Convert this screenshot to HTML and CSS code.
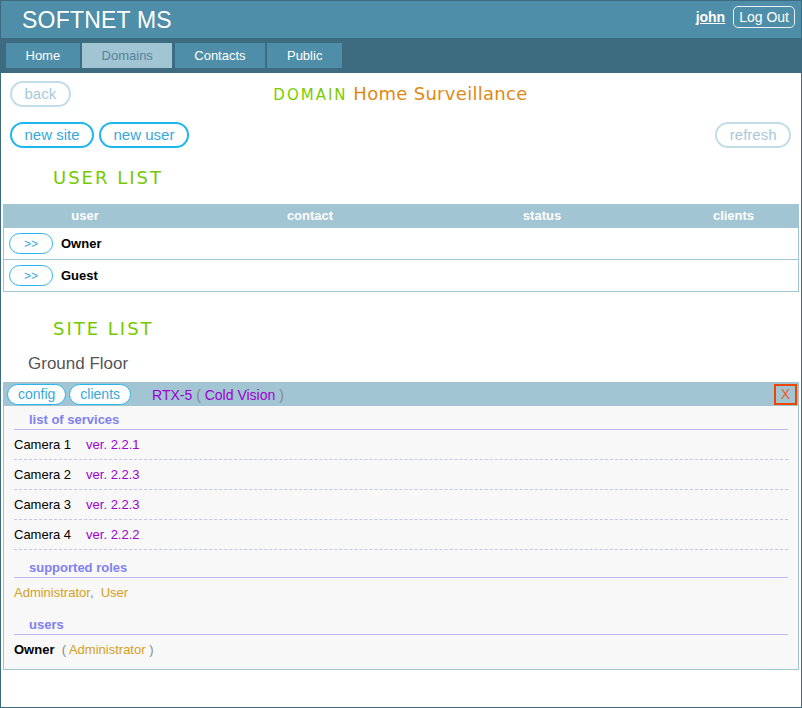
FILE: index.html
```html
<!DOCTYPE html>
<html lang="en">
<head>
<meta charset="utf-8">
<title>SOFTNET MS</title>
<link rel="stylesheet" href="styles.css">
</head>
<body>
<div class="page">
  <header class="topbar">
    <div class="brand">SOFTNET MS</div>
    <div class="account">
      <a class="user-link" href="#">john</a>
      <button class="logout">Log Out</button>
    </div>
  </header>
  <nav class="tabs">
    <a class="tab" href="#">Home</a>
    <a class="tab tab-active" href="#">Domains</a>
    <a class="tab" href="#">Contacts</a>
    <a class="tab" href="#">Public</a>
  </nav>
  <main class="content">
    <div class="toolbar toolbar-top">
      <div class="toolbar-left"><button class="pill pill-disabled">back</button></div>
      <h1 class="domain-title"><span class="domain-label">DOMAIN</span> <span class="domain-name">Home Surveillance</span></h1>
      <div class="toolbar-right"></div>
    </div>
    <div class="toolbar toolbar-actions">
      <div class="btn-group">
        <button class="pill">new site</button>
        <button class="pill">new user</button>
      </div>
      <button class="pill pill-disabled">refresh</button>
    </div>

    <h2 class="section-heading">USER LIST</h2>
    <div class="user-table">
      <div class="user-head">
        <div class="th">user</div>
        <div class="th">contact</div>
        <div class="th">status</div>
        <div class="th th-clients">clients</div>
      </div>
      <div class="user-row">
        <button class="open-btn">&gt;&gt;</button>
        <span class="user-name">Owner</span>
      </div>
      <div class="user-row">
        <button class="open-btn">&gt;&gt;</button>
        <span class="user-name">Guest</span>
      </div>
    </div>

    <h2 class="section-heading section-heading-sites">SITE LIST</h2>
    <div class="site-group">Ground Floor</div>
    <div class="site-box">
      <div class="site-head">
        <button class="mini-btn">config</button>
        <button class="mini-btn">clients</button>
        <span class="device"><span class="purple">RTX-5</span> <span class="paren">(</span> <span class="purple">Cold Vision</span> <span class="paren">)</span></span>
        <button class="close-btn">X</button>
      </div>
      <div class="site-body">
        <div class="sub-title sub-title-first">list of services</div>
        <div class="service"><span class="service-name">Camera 1</span><span class="purple">ver. 2.2.1</span></div>
        <div class="service"><span class="service-name">Camera 2</span><span class="purple">ver. 2.2.3</span></div>
        <div class="service"><span class="service-name">Camera 3</span><span class="purple">ver. 2.2.3</span></div>
        <div class="service"><span class="service-name">Camera 4</span><span class="purple">ver. 2.2.2</span></div>
        <div class="sub-title">supported roles</div>
        <div class="plain-line roles"><span class="gold">Administrator</span><span class="paren">,</span>&nbsp; <span class="gold">User</span></div>
        <div class="sub-title">users</div>
        <div class="plain-line last-line"><span class="owner">Owner</span>&nbsp; <span class="paren">(</span> <span class="gold">Administrator</span> <span class="paren">)</span></div>
      </div>
    </div>
  </main>
</div>
</body>
</html>
```

FILE: styles.css
```css
* { box-sizing: border-box; }

html, body {
  margin: 0;
  padding: 0;
  background: #ffffff;
}

body {
  font-family: "Liberation Sans", Arial, sans-serif;
  font-size: 13px;
  color: #000;
}

.page {
  width: 802px;
  height: 708px;
  border: 1px solid #3d6a7e;
  overflow: hidden;
}

/* top bar */
.topbar {
  height: 37px;
  background: #4f8ea8;
  display: flex;
  align-items: center;
  justify-content: space-between;
  padding: 0 6px 0 21px;
}

.brand {
  color: #fff;
  font-size: 23px;
  line-height: 26px;
  letter-spacing: 0.2px;
}

.account {
  display: flex;
  align-items: center;
  gap: 8px;
  margin-top: -6px;
}

.user-link {
  color: #fff;
  font-weight: bold;
  font-size: 14px;
  text-decoration: underline;
}

.logout {
  font-family: "Liberation Sans", Arial, sans-serif;
  font-size: 14px;
  line-height: 20px;
  color: #fff;
  background: transparent;
  border: 1px solid #e8f2f6;
  border-radius: 5px;
  padding: 0 5px;
}

/* tabs */
.tabs {
  height: 35px;
  background: #3d6b7f;
  display: flex;
  gap: 2.4px;
  padding: 5px 5px;
}

.tab {
  display: block;
  height: 25px;
  line-height: 25px;
  padding: 0 19.5px;
  background: #4f8ea8;
  color: #fff;
  font-size: 13px;
  text-decoration: none;
}

.tab-active {
  background: #a2c5d3;
  color: #56829a;
}

/* content */
.content {
  padding: 0 2px;
}

.toolbar {
  padding: 0 8px 0 7px;
}

.toolbar-top {
  margin-top: 8px;
  height: 26px;
  display: grid;
  grid-template-columns: 1fr auto 1fr;
  align-items: center;
}

.toolbar-left {
  display: flex;
}

.toolbar-actions {
  margin-top: 15px;
  display: flex;
  justify-content: space-between;
  align-items: center;
}

.btn-group {
  display: flex;
  gap: 5px;
}

.pill {
  font-family: "Liberation Sans", Arial, sans-serif;
  font-size: 15px;
  line-height: 18px;
  height: 26px;
  padding: 2px 12.5px;
  border: 2px solid #1eb6ee;
  border-radius: 13px;
  background: #fff;
  color: #38a8dc;
}

.pill-disabled {
  border-color: #c3dde8;
  color: #a9c9d8;
}

.domain-title {
  margin: 0;
  font-family: "DejaVu Sans", Verdana, sans-serif;
  font-weight: normal;
  font-size: 18px;
  line-height: 20px;
  height: 20px;
  white-space: nowrap;
}

.domain-label {
  font-size: 15px;
  letter-spacing: 2px;
  color: #7acc00;
}

.domain-name {
  font-size: 18px;
  letter-spacing: 0.3px;
  color: #e08a14;
}

.section-heading {
  margin: 19px 0 15px;
  padding-left: 50px;
  font-family: "DejaVu Sans", Verdana, sans-serif;
  font-weight: normal;
  font-size: 18px;
  line-height: 22px;
  letter-spacing: 2px;
  color: #76c900;
}

.section-heading-sites {
  margin: 26px 0 0;
}

/* user table */
.user-table {
  border: 1px solid #a0c4d4;
  border-top: 0;
}

.user-head {
  display: grid;
  grid-template-columns: 162px 288px 176px 1fr;
  height: 24px;
  background: #a2c5d4;
  margin: 0 -1px;
  padding: 0 1px;
}

.th {
  color: #fff;
  font-weight: bold;
  font-size: 13px;
  line-height: 24px;
  text-align: center;
}

.th-clients {
  padding-left: 39px;
}

.user-row {
  display: flex;
  align-items: center;
  height: 32px;
  padding-left: 5px;
  border-bottom: 1px solid #a0c4d4;
}

.user-row:last-child {
  border-bottom: 0;
  height: 31px;
}

.open-btn {
  width: 44px;
  height: 21px;
  padding: 0;
  border: 1px solid #2ab6ec;
  border-radius: 11px;
  background: #fff;
  color: #3aa8dc;
  font-family: "Liberation Sans", Arial, sans-serif;
  font-size: 12px;
  margin-right: 8px;
}

.user-name {
  font-weight: bold;
  font-size: 13px;
}

/* site list */
.site-group {
  margin: 14px 0 8px;
  padding-left: 25px;
  font-size: 17px;
  line-height: 20px;
  color: #555;
}

.site-box {
  border: 1px solid #a0c4cc;
  background: #f8f8f8;
}

.site-head {
  display: flex;
  align-items: center;
  height: 23px;
  background: #a2c5d4;
  padding: 0 1px 0 3px;
  gap: 3px;
}

.mini-btn {
  font-family: "Liberation Sans", Arial, sans-serif;
  font-size: 14px;
  line-height: 19px;
  padding: 0 10px;
  border: 1px solid #2ab6ec;
  border-radius: 11px;
  background: #fff;
  color: #38a8dc;
}

.device {
  margin-left: 18px;
  font-size: 14px;
  flex: 1;
}

.purple {
  color: #9a00d0;
}

.paren {
  color: #888;
}

.gold {
  color: #d4a020;
}

.close-btn {
  width: 23px;
  height: 21px;
  padding: 0;
  border: 2px solid #f04400;
  background: transparent;
  color: #f05a20;
  font-family: "Liberation Sans", Arial, sans-serif;
  font-size: 14px;
  line-height: 17px;
}

.site-body {
  padding: 0 10px;
}

.sub-title {
  padding: 10px 0 1px 15px;
  line-height: 16px;
  font-size: 13px;
  font-weight: bold;
  color: #8080f0;
  border-bottom: 1px solid #bcbcf4;
}

.sub-title-first {
  padding-top: 6px;
}

.service {
  height: 30px;
  line-height: 29px;
  font-size: 13px;
  border-bottom: 1px dashed #c4c4f0;
}

.service-name {
  margin-right: 15px;
}

.plain-line {
  font-size: 13px;
  line-height: 16px;
  padding: 7px 0 6px;
}

.last-line {
  padding-bottom: 11px;
}

.owner {
  font-weight: bold;
}
```
